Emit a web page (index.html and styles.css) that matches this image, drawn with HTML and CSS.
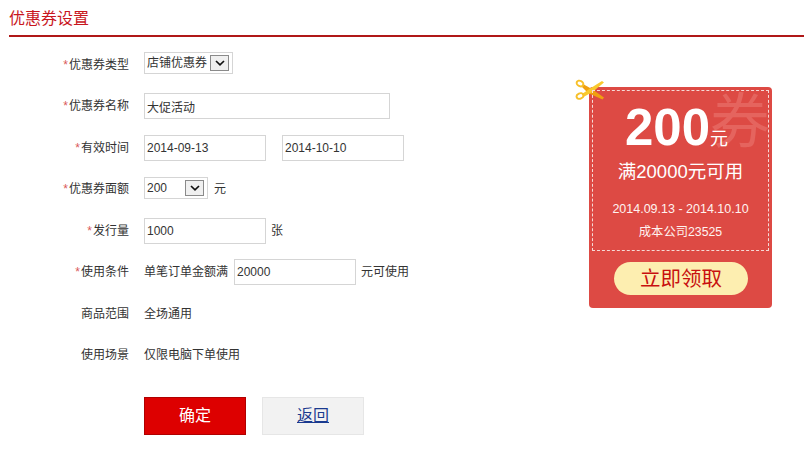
FILE: index.html
```html
<!DOCTYPE html>
<html lang="zh-CN">
<head>
  <meta charset="UTF-8">
  <meta name="viewport" content="width=device-width, initial-scale=1.0">
  <title>优惠券设置</title>
  <link rel="stylesheet" href="styles.css">
</head>
<body>

  <h1 class="page-title">优惠券设置</h1>

  <div class="content">
    <!-- Form -->
    <form class="coupon-form">
      <div class="form-row">
        <label class="form-label"><i>*</i>优惠券类型</label>
        <div class="select-wrap select-type">
          <select><option>店铺优惠券</option></select>
          <span class="select-arrow"><svg width="10" height="6" viewBox="0 0 10 6"><path d="M1 1l4 3.8L9 1" fill="none" stroke="#111" stroke-width="1.7"/></svg></span>
        </div>
      </div>
      <div class="form-row">
        <label class="form-label"><i>*</i>优惠券名称</label>
        <input class="text-input input-long" type="text" value="大促活动">
      </div>
      <div class="form-row">
        <label class="form-label"><i>*</i>有效时间</label>
        <input class="text-input" type="text" value="2014-09-13">
        <input class="text-input date-end" type="text" value="2014-10-10">
      </div>
      <div class="form-row">
        <label class="form-label"><i>*</i>优惠券面额</label>
        <div class="select-wrap select-amount">
          <select><option>200</option></select>
          <span class="select-arrow"><svg width="10" height="6" viewBox="0 0 10 6"><path d="M1 1l4 3.8L9 1" fill="none" stroke="#111" stroke-width="1.7"/></svg></span>
        </div>
        <span class="unit">元</span>
      </div>
      <div class="form-row">
        <label class="form-label"><i>*</i>发行量</label>
        <input class="text-input" type="text" value="1000">
        <span class="unit">张</span>
      </div>
      <div class="form-row">
        <label class="form-label"><i>*</i>使用条件</label>
        <span>单笔订单金额满</span>
        <input class="text-input input-min" type="text" value="20000">
        <span class="unit">元可使用</span>
      </div>
      <div class="form-row">
        <label class="form-label">商品范围</label>
        <span>全场通用</span>
      </div>
      <div class="form-row">
        <label class="form-label">使用场景</label>
        <span>仅限电脑下单使用</span>
      </div>
      <div class="form-actions">
        <button class="btn-submit" type="button">确定</button>
        <a class="btn-back" href="#">返回</a>
      </div>
    </form>

    <!-- Coupon preview -->
    <aside class="coupon">
      <svg class="scissors" width="30" height="22" viewBox="0 0 30 22">
        <path d="M8 5L16 9.5L29 18.5L27.5 20.5L13 14L7 8Z" fill="#f0a010"/>
        <path d="M7 15L15 9.5L27 2L29 3.5L17.5 13L8.5 18Z" fill="#f9c92e"/>
        <ellipse cx="5" cy="4.5" rx="3.5" ry="2.7" fill="none" stroke="#f7c02a" stroke-width="1.9" transform="rotate(25 5 4.5)"/>
        <ellipse cx="5" cy="17" rx="3.5" ry="2.7" fill="none" stroke="#f7c02a" stroke-width="1.9" transform="rotate(-25 5 17)"/>
      </svg>
      <div class="coupon-body">
        <span class="coupon-mark">券</span>
        <div class="coupon-value"><b>200</b><span>元</span></div>
        <div class="coupon-rule">满20000元可用</div>
        <div class="coupon-date">2014.09.13 - 2014.10.10</div>
        <div class="coupon-shop">成本公司23525</div>
      </div>
      <a class="coupon-get" href="#">立即领取</a>
    </aside>
  </div>

</body>
</html>
```

FILE: styles.css
```css
body {
  margin: 0;
  font-family: "Liberation Sans", Arial, "Noto Sans CJK SC", sans-serif;
  font-size: 12px;
  color: #333;
  background-color: #fff;
}

.page-title {
  margin: 0 0 0 9px;
  height: 35px;
  line-height: 37px;
  font-size: 16px;
  font-weight: normal;
  color: #c8161d;
  border-bottom: 2px solid #b01818;
}

.content {
  display: flex;
  justify-content: space-between;
  padding-right: 32px;
}

.coupon-form {
  padding-top: 5.5px;
}

.form-row {
  display: flex;
  align-items: center;
  height: 41.5px;
}

.form-label {
  width: 129px;
  margin-right: 15px;
  text-align: right;
}

.form-label i {
  margin-right: 1px;
  color: #d9585a;
  font-style: normal;
}

.text-input {
  box-sizing: border-box;
  width: 122px;
  height: 26px;
  margin-top: 3px;
  padding: 0 2px;
  border: 1px solid #d5d5d5;
  font-family: inherit;
  font-size: 12px;
  color: #333;
}

.input-long {
  width: 246px;
}

.date-end {
  margin-left: 16px;
}

.input-min {
  margin-left: 6px;
}

.unit {
  margin-left: 5px;
}

.select-wrap {
  position: relative;
  box-sizing: border-box;
  height: 22px;
  border: 1px solid #d5d5d5;
}

.select-type {
  width: 89px;
}

.select-amount {
  width: 64px;
  margin: 1px 1px 0 0;
}

.select-wrap select {
  width: 100%;
  height: 20px;
  padding: 0 2px;
  border: none;
  appearance: none;
  background: #fff;
  font-family: inherit;
  font-size: 12px;
  color: #333;
}

.select-arrow {
  position: absolute;
  top: 2px;
  right: 3px;
  box-sizing: border-box;
  display: flex;
  align-items: center;
  justify-content: center;
  width: 19px;
  height: 16px;
  border: 1px solid #8a8a8a;
  background-color: #f0f0f0;
  pointer-events: none;
}

.form-actions {
  display: flex;
  gap: 16px;
  margin: 22.5px 0 0 144px;
}

.btn-submit,
.btn-back {
  box-sizing: border-box;
  width: 102px;
  height: 38px;
  font-family: inherit;
  font-size: 16px;
  line-height: 36px;
  text-align: center;
}

.btn-submit {
  border: 1px solid #b00000;
  background-color: #dd0000;
  color: #fff;
  padding: 0;
}

.btn-back {
  border: 1px solid #e6e6e6;
  background-color: #f2f2f2;
  color: #1a3a8f;
}

/* coupon on the right */
.coupon {
  position: relative;
  box-sizing: border-box;
  width: 183px;
  height: 221px;
  margin-top: 50px;
  padding: 3px 3px 0;
  border-radius: 4px;
  background-color: #dd4a44;
  color: #fff;
  text-align: center;
}

.scissors {
  position: absolute;
  top: -8px;
  left: -14px;
}

.coupon-body {
  position: relative;
  box-sizing: border-box;
  height: 161px;
  border: 1px dashed #f6d9d6;
}

.coupon-mark {
  position: absolute;
  top: -3px;
  right: -2px;
  font-size: 60px;
  line-height: 70px;
  color: #e5645e;
}

.coupon-value {
  position: relative;
  height: 58px;
  padding: 8px 8px 0 0;
  line-height: 58px;
}

.coupon-value b {
  font-size: 51px;
}

.coupon-value span {
  font-size: 18px;
}

.coupon-rule {
  position: relative;
  margin-top: 3px;
  font-size: 18.5px;
  line-height: 24px;
}

.coupon-date {
  margin-top: 15px;
  font-size: 12.5px;
  line-height: 20px;
  color: #fff2f0;
}

.coupon-shop {
  margin-top: 3px;
  font-size: 12.3px;
  line-height: 20px;
  color: #fff2f0;
}

.coupon-get {
  display: block;
  width: 134px;
  height: 33px;
  margin: 11px auto 0;
  padding-left: 1px;
  box-sizing: border-box;
  border-radius: 17px;
  background-color: #fdeeb0;
  color: #c8100f;
  font-size: 20.5px;
  line-height: 34px;
  text-decoration: none;
}
```
